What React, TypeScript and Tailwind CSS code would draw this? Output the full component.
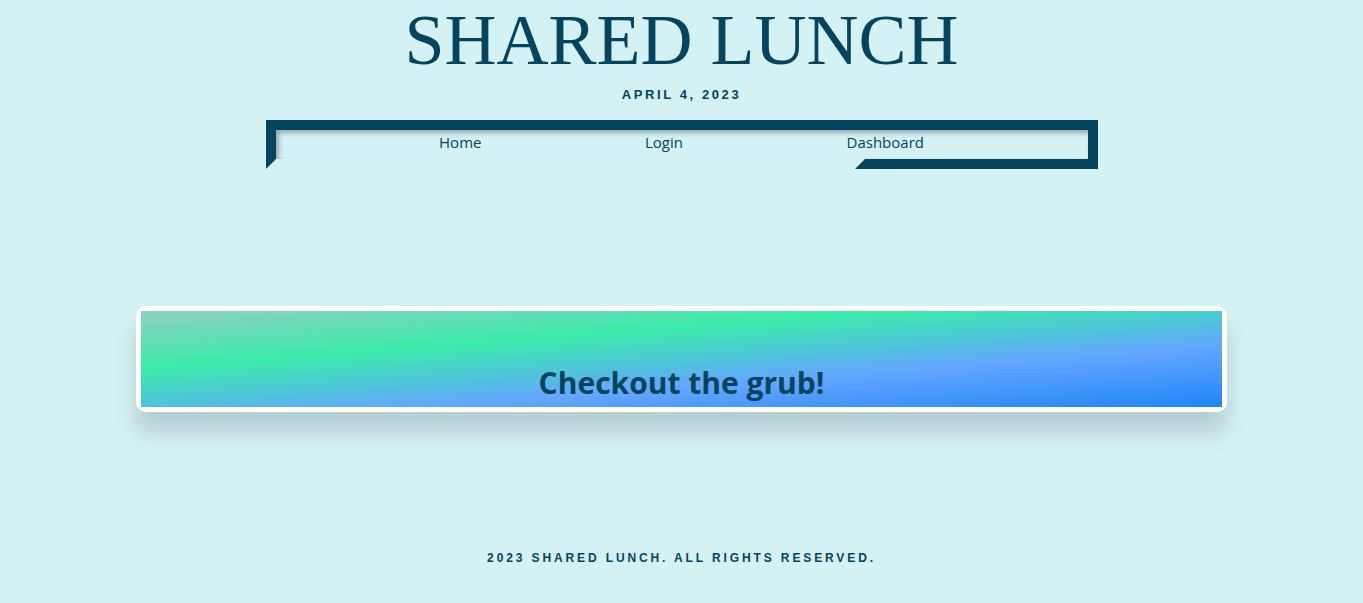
const links = ['Home', 'Login', 'Dashboard'];

export default function App() {
  return (
    <div className="min-h-screen bg-[#d4f1f4] text-[#05445e] flex flex-col items-center">
      {/* Header */}
      <h1 className="text-[72px] leading-[80px] font-normal font-['Liberation_Serif','Times_New_Roman',serif]">
        SHARED LUNCH
      </h1>
      <p className="mt-[7px] text-[13px] leading-4 font-bold tracking-[0.2em] font-['Liberation_Sans',Arial,sans-serif]">
        APRIL 4, 2023
      </p>

      {/* Nav box */}
      <nav className="relative mt-[17px] w-[832px] border-[10px] border-[#05445e] border-b-[#d4f1f4] shadow-[inset_3px_3px_5px_rgba(0,0,0,0.3)]">
        <ul className="flex justify-evenly h-[29px] items-center pb-[4px] font-['Open_Sans',sans-serif] text-[15px]">
          {links.map((l) => (
            <li key={l}>
              <a href="#" className="text-[#05445e]">{l}</a>
            </li>
          ))}
        </ul>
        <div className="absolute -right-[10px] -bottom-[10px] w-[243px] h-0 border-l-[10px] border-l-transparent border-b-[10px] border-b-[#05445e]"></div>
      </nav>

      {/* Card */}
      <section className="mt-[137px] w-[80%] bg-white p-[5px] rounded-[10px] shadow-[0_20px_22px_rgba(0,0,0,0.15)]">
        <div className="h-[96px] bg-[linear-gradient(175.6deg,#90cfc5_0%,#3cebaa_32%,#4dc8d6_50%,#64a6ff_66%,#1f85f7_100%)] flex items-end justify-center pb-[6px]">
          <h2 className="text-[30px] leading-[36px] font-bold font-['Open_Sans',sans-serif]">
            Checkout the grub!
          </h2>
        </div>
      </section>

      {/* Footer */}
      <footer className="mt-[138px] text-[12px] leading-4 font-bold tracking-[0.24em] font-['Liberation_Sans',Arial,sans-serif]">
        2023 SHARED LUNCH. ALL RIGHTS RESERVED.
      </footer>
    </div>
  );
}
